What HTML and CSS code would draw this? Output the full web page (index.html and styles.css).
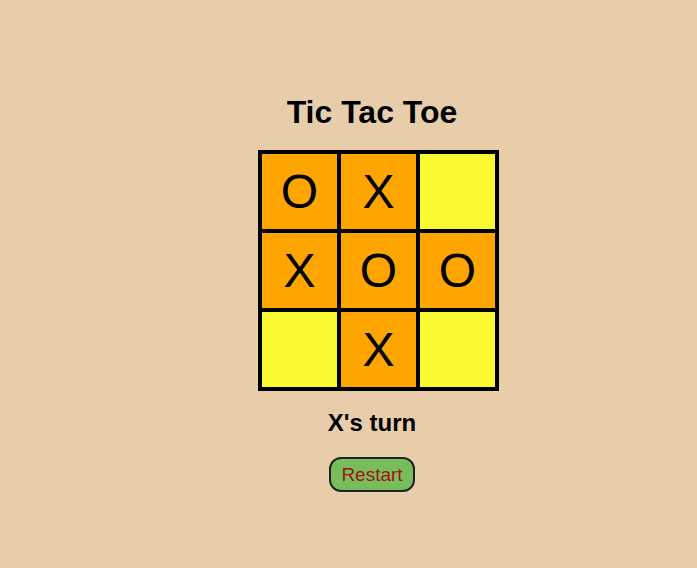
FILE: index.html
```html
<!DOCTYPE html>
<html lang="en">
<head>
<meta charset="utf-8">
<title>Tic Tac Toe</title>
<link rel="stylesheet" href="styles.css">
</head>
<body>
<main class="game">
  <h1 class="title">Tic Tac Toe</h1>
  <div class="board">
    <div class="cell filled">O</div>
    <div class="cell filled">X</div>
    <div class="cell empty"></div>
    <div class="cell filled">X</div>
    <div class="cell filled">O</div>
    <div class="cell filled">O</div>
    <div class="cell empty"></div>
    <div class="cell filled">X</div>
    <div class="cell empty"></div>
  </div>
  <p class="status">X's turn</p>
  <button class="restart" type="button">Restart</button>
</main>
</body>
</html>
```

FILE: styles.css
```css
html, body {
  margin: 0;
  padding: 0;
}

body {
  background: #e8cdab;
  font-family: "Liberation Sans", Arial, sans-serif;
  color: #000;
  min-height: 568px;
}

.game {
  display: flex;
  flex-direction: column;
  align-items: center;
  gap: 20px;
  padding-top: 94px;
  padding-left: 47px;
}

.title {
  margin: 0;
  font-size: 32px;
  line-height: 36px;
  font-weight: bold;
}

.board {
  display: grid;
  grid-template-columns: repeat(3, 79px);
  grid-template-rows: repeat(3, 79px);
  border: 2px solid #000;
  margin-left: 13px;
}

.cell {
  box-sizing: border-box;
  border: 2px solid #000;
  display: flex;
  align-items: center;
  justify-content: center;
  font-size: 48px;
  line-height: 1;
}

.filled {
  background: #ffa500;
}

.empty {
  background: #fafa33;
}

.status {
  margin: -2px 0 1px;
  font-size: 24px;
  line-height: 27px;
  font-weight: bold;
}

.restart {
  font-family: "Liberation Sans", Arial, sans-serif;
  font-size: 19px;
  line-height: 21px;
  padding: 5px 10px;
  border: 2px solid #222;
  border-radius: 12px;
  background: #78bd5b;
  color: #a31313;
}
```
